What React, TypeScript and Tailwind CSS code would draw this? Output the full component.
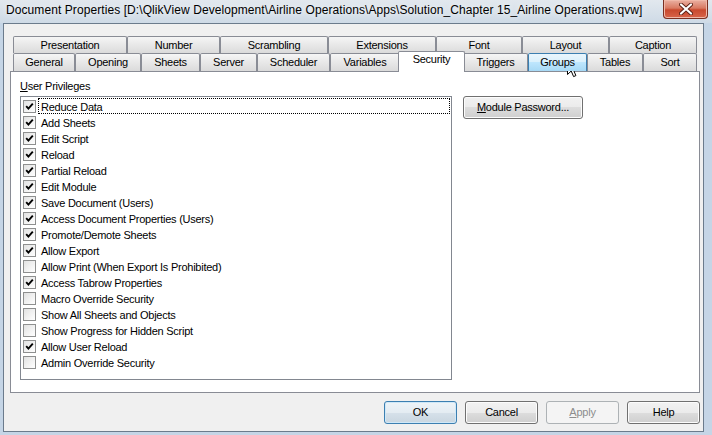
import React from "react"

type TabDef = { label: string; w: string; state?: "selected" | "hot" }

const topTabs: TabDef[] = [
  { label: "Presentation", w: "w-[114px]" },
  { label: "Number", w: "w-[93px]" },
  { label: "Scrambling", w: "w-[108px]" },
  { label: "Extensions", w: "w-[108px]" },
  { label: "Font", w: "w-[86px]" },
  { label: "Layout", w: "w-[87px]" },
  { label: "Caption", w: "w-[88px]" },
]

const bottomTabs: TabDef[] = [
  { label: "General", w: "w-[62px]" },
  { label: "Opening", w: "w-[66px]" },
  { label: "Sheets", w: "w-[59px]" },
  { label: "Server", w: "w-[57px]" },
  { label: "Scheduler", w: "w-[73px]" },
  { label: "Variables", w: "w-[70px]" },
  { label: "Security", w: "w-[67px]", state: "selected" },
  { label: "Triggers", w: "w-[65px]" },
  { label: "Groups", w: "w-[59px]", state: "hot" },
  { label: "Tables", w: "w-[56px]" },
  { label: "Sort", w: "w-[54px]" },
]

const privileges: [string, boolean][] = [
  ["Reduce Data", true],
  ["Add Sheets", true],
  ["Edit Script", true],
  ["Reload", true],
  ["Partial Reload", true],
  ["Edit Module", true],
  ["Save Document (Users)", true],
  ["Access Document Properties (Users)", true],
  ["Promote/Demote Sheets", true],
  ["Allow Export", true],
  ["Allow Print (When Export Is Prohibited)", false],
  ["Access Tabrow Properties", true],
  ["Macro Override Security", false],
  ["Show All Sheets and Objects", false],
  ["Show Progress for Hidden Script", false],
  ["Allow User Reload", true],
  ["Admin Override Security", false],
]

function Tab({ label, w, state }: TabDef) {
  if (state === "selected") {
    return (
      <div
        className={`${w} relative z-10 -mx-[2px] -mt-[2px] h-[21px] shrink-0 rounded-t-[2px] border border-b-0 border-[#898c95] bg-white pt-[1px] text-center leading-[13px]`}
      >
        {label}
      </div>
    )
  }
  const look =
    state === "hot"
      ? "border-[#3c7fb1] bg-[linear-gradient(#eaf6fd,#d9f0fc_50%,#bee6fd_50%,#a7d9f5)]"
      : "border-[#898c95] bg-linear-to-b from-[#f5f5f5] to-[#dbdbdb]"
  return (
    <div
      className={`${w} ${look} flex h-full shrink-0 items-center justify-center rounded-t-[2px] border border-b-0 leading-[13px]`}
    >
      {label}
    </div>
  )
}

function Checkbox({ checked }: { checked: boolean }) {
  return (
    <div className="mt-[1px] flex h-[13px] w-[13px] shrink-0 items-center justify-center border border-[#8e8f8f] bg-linear-to-br from-[#e2e2e2] to-white">
      {checked && (
        <svg width="11" height="11" viewBox="0 0 11 11">
          <path d="M2.2 5.2 L4.4 7.6 L8.8 2.6" fill="none" stroke="#000" strokeWidth="1.9" />
        </svg>
      )}
    </div>
  )
}

function Button({
  children,
  variant,
}: {
  children: React.ReactNode
  variant?: "default" | "disabled"
}) {
  const look =
    variant === "default"
      ? "border-[#3c7fb1] bg-[linear-gradient(#eef4f8,#e4ecf2_50%,#d6e1ea_50%,#c9d6e0)] shadow-[inset_0_0_0_1px_#cfe8f8]"
      : variant === "disabled"
        ? "border-[#adb2b5] bg-[#f4f4f4] text-[#8d8d8d]"
        : "border-[#707070] bg-[linear-gradient(#f2f2f2,#ebebeb_50%,#dddddd_50%,#cfcfcf)] shadow-[inset_0_0_0_1px_#fcfcfc]"
  return (
    <div
      className={`${look} flex h-[23px] w-[73px] items-center justify-center rounded-[3px] border leading-[13px]`}
    >
      {children}
    </div>
  )
}

export default function App() {
  return (
    <div className="relative flex h-[435px] w-[712px] flex-col overflow-hidden bg-[#c5d5e6] font-['Liberation_Sans',Arial,sans-serif] text-[11px] tracking-[-0.25px] text-black">
      {/* title bar */}
      <div className="flex h-[23px] shrink-0 bg-[linear-gradient(180deg,#e2e8ee,#cedae6)]">
        <div className="pl-[6px] pt-[3px] text-[12px] leading-[15px] tracking-[0.08px] [text-shadow:0_0_6px_#fff]">
          Document Properties [D:\QlikView Development\Airline Operations\Apps\Solution_Chapter 15_Airline Operations.qvw]
        </div>
        <div className="ml-auto mr-[4px] flex h-[19px] w-[45px] shrink-0 items-center justify-center rounded-b-[4px] border border-t-0 border-[#7a2f21] bg-[linear-gradient(#eab0a2,#d97a62_45%,#c8492e_55%,#d8644a)] shadow-[inset_0_0_0_1px_#f0b8a8]">
          <svg width="14" height="12" viewBox="0 0 14 12">
            <path d="M2 1.5 L12 10.5 M12 1.5 L2 10.5" stroke="#5a1f14" strokeWidth="4" strokeLinecap="round" />
            <path d="M2 1.5 L12 10.5 M12 1.5 L2 10.5" stroke="#fff" strokeWidth="2.2" strokeLinecap="round" />
          </svg>
        </div>
      </div>

      {/* client */}
      <div className="flex-1 pb-[3px] pl-[3px] pr-[8px]">
        <div className="flex h-full flex-col border border-[#6b7b8c] bg-[#f0f0f0] pl-[6px] pr-[3px] pt-[12px]">
          <div className="flex h-[17px] pl-[3px]">
            {topTabs.map((t) => (
              <Tab key={t.label} {...t} />
            ))}
          </div>
          <div className="relative z-10 flex h-[18px] pl-[3px]">
            {bottomTabs.map((t) => (
              <Tab key={t.label} {...t} />
            ))}
          </div>

          <div className="relative h-[322px] shrink-0 border border-[#898c95] bg-white pl-[9px] pt-[8px]">
            <div className="h-[13px] leading-[13px]">
              <span className="underline">U</span>ser Privileges
            </div>
            <div className="mt-[3px] flex items-start">
              <div className="h-[284px] w-[432px] border border-[#828790] bg-white pr-[1px] pt-[1px]">
                {privileges.map(([label, checked], i) => (
                  <div key={label} className="flex h-[16px] items-center pl-[2px]">
                    <Checkbox checked={checked} />
                    <div
                      className={`ml-[2px] flex h-full flex-1 items-center border pl-[2px] pt-[2px] leading-[13px] ${
                        i === 0 ? "border-dotted border-black" : "border-transparent"
                      }`}
                    >
                      {label}
                    </div>
                  </div>
                ))}
              </div>
              <div className="ml-[11px] flex h-[23px] w-[120px] items-center justify-center rounded-[3px] border border-[#707070] bg-[linear-gradient(#f2f2f2,#ebebeb_50%,#dddddd_50%,#cfcfcf)] leading-[13px] shadow-[inset_0_0_0_1px_#fcfcfc]">
                <span className="underline">M</span>odule Password...
              </div>
            </div>
          </div>

          <div className="flex justify-end gap-[8px] pt-[8px]">
            <Button variant="default">OK</Button>
            <Button>Cancel</Button>
            <Button variant="disabled">
              <span className="underline">A</span>pply
            </Button>
            <Button>Help</Button>
          </div>
        </div>
      </div>

      {/* mouse pointer over the Groups tab */}
      <svg
        className="pointer-events-none absolute left-[567px] top-[59px]"
        width="13"
        height="20"
        viewBox="0 0 13 20"
      >
        <path
          d="M0.5 0.5 L0.5 15.5 L4.2 12 L6.6 17.6 L8.9 16.6 L6.6 11.2 L11.5 11.2 Z"
          fill="#fff"
          stroke="#000"
          strokeWidth="1"
          strokeLinejoin="round"
        />
      </svg>
    </div>
  )
}
